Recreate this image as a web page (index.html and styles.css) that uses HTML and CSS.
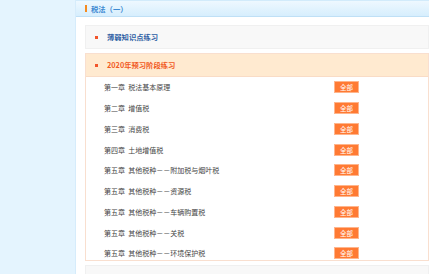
FILE: index.html
```html
<!DOCTYPE html>
<html lang="zh-CN">
<head>
    <meta charset="UTF-8">
    <title>税法（一）</title>
    <link rel="stylesheet" href="styles.css">
</head>
<body>
    <aside class="side"></aside>
    <main class="panel">
        <div class="panel-head"><span class="bar"></span>税法（一）</div>

        <div class="sec sec-plain">
            <div class="sec-head"><span class="dot"></span>薄弱知识点练习</div>
        </div>

        <div class="sec sec-open">
            <div class="sec-head"><span class="dot"></span>2020年预习阶段练习</div>
            <ul class="chapters">
                <li><span>第一章&nbsp;&nbsp;税法基本原理</span><a class="btn">全部</a></li>
                <li><span>第二章&nbsp;&nbsp;增值税</span><a class="btn">全部</a></li>
                <li><span>第三章&nbsp;&nbsp;消费税</span><a class="btn">全部</a></li>
                <li><span>第四章&nbsp;&nbsp;土地增值税</span><a class="btn">全部</a></li>
                <li><span>第五章&nbsp;&nbsp;其他税种－－附加税与烟叶税</span><a class="btn">全部</a></li>
                <li><span>第五章&nbsp;&nbsp;其他税种－－资源税</span><a class="btn">全部</a></li>
                <li><span>第五章&nbsp;&nbsp;其他税种－－车辆购置税</span><a class="btn">全部</a></li>
                <li><span>第五章&nbsp;&nbsp;其他税种－－关税</span><a class="btn">全部</a></li>
                <li><span>第五章&nbsp;&nbsp;其他税种－－环境保护税</span><a class="btn">全部</a></li>
            </ul>
        </div>

        <div class="sec sec-plain"></div>
    </main>
</body>
</html>
```

FILE: styles.css
```css
body { margin: 0; display: flex; height: 274px; overflow: hidden; background: #fff; font-family: "Noto Sans CJK SC", "Liberation Sans", sans-serif; }
.side { width: 76px; flex-shrink: 0; background: #e4f4fe; border-right: 1px solid #d6ecfb; box-sizing: border-box; }
.panel { width: 353px; flex-shrink: 0; }
.panel-head { height: 17px; box-sizing: border-box; display: flex; align-items: center; padding-left: 9px; font-size: 7.3px; font-weight: bold; color: #3d8ad2; background: linear-gradient(#eef8ff, #d6eefd); border-top: 1px solid #d2ebfb; border-bottom: 1px solid #bfe0f6; }
.bar { width: 2px; height: 7px; background: #f58a1f; margin-right: 4px; }
.sec { margin: 0 0 4px 9px; box-sizing: border-box; }
.sec-plain { height: 24px; margin-top: 8px; background: #f8f8f8; border: 1px solid #f0f0f0; }
.sec-plain:last-child { margin-top: 3px; height: 20px; }
.sec-head { height: 22px; display: flex; align-items: center; padding-left: 9px; font-size: 7.3px; font-weight: bold; color: #2f5fa4; }
.dot { width: 3px; height: 3px; background: #f2542a; margin-right: 9px; }
.sec-open { height: 208px; overflow: hidden; border: 1px solid #f9dfcf; }
.sec-open .sec-head { background: #ffead0; color: #f15a24; border-bottom: 1px solid #f9dcc6; }
.chapters { list-style: none; margin: 0; padding: 0; }
.chapters li { height: 20.75px; display: flex; align-items: center; padding-left: 18px; font-size: 7px; color: #444; }
.chapters li span { width: 230px; }
.btn { width: 25px; height: 12px; display: flex; align-items: center; justify-content: center; background: #ff7a33; color: #fff; font-size: 6.5px; border: 1px solid #ffb58c; box-sizing: border-box; }
```
